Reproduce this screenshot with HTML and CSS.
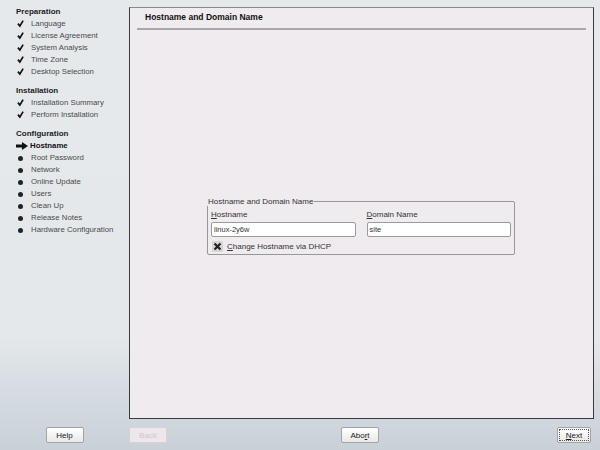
FILE: index.html
```html
<!DOCTYPE html>
<html lang="en">
<head>
    <meta charset="UTF-8">
    <title>Hostname and Domain Name</title>
    <link rel="stylesheet" href="styles.css">
</head>
<body>
    <div class="app">
        <div class="sidebar">
            <div class="step-group">
                <div class="group-title">Preparation</div>
                <div class="step"><span class="mark"><svg viewBox="0 0 8 9" width="7" height="8"><path d="M0.3 4.8 L2 3.4 L3.2 5.2 L6.2 0.2 L7.8 1.2 L3.4 8.6 Z" fill="#111"/></svg></span>Language</div>
                <div class="step"><span class="mark"><svg viewBox="0 0 8 9" width="7" height="8"><path d="M0.3 4.8 L2 3.4 L3.2 5.2 L6.2 0.2 L7.8 1.2 L3.4 8.6 Z" fill="#111"/></svg></span>License Agreement</div>
                <div class="step"><span class="mark"><svg viewBox="0 0 8 9" width="7" height="8"><path d="M0.3 4.8 L2 3.4 L3.2 5.2 L6.2 0.2 L7.8 1.2 L3.4 8.6 Z" fill="#111"/></svg></span>System Analysis</div>
                <div class="step"><span class="mark"><svg viewBox="0 0 8 9" width="7" height="8"><path d="M0.3 4.8 L2 3.4 L3.2 5.2 L6.2 0.2 L7.8 1.2 L3.4 8.6 Z" fill="#111"/></svg></span>Time Zone</div>
                <div class="step"><span class="mark"><svg viewBox="0 0 8 9" width="7" height="8"><path d="M0.3 4.8 L2 3.4 L3.2 5.2 L6.2 0.2 L7.8 1.2 L3.4 8.6 Z" fill="#111"/></svg></span>Desktop Selection</div>
            </div>
            <div class="step-group">
                <div class="group-title">Installation</div>
                <div class="step"><span class="mark"><svg viewBox="0 0 8 9" width="7" height="8"><path d="M0.3 4.8 L2 3.4 L3.2 5.2 L6.2 0.2 L7.8 1.2 L3.4 8.6 Z" fill="#111"/></svg></span>Installation Summary</div>
                <div class="step"><span class="mark"><svg viewBox="0 0 8 9" width="7" height="8"><path d="M0.3 4.8 L2 3.4 L3.2 5.2 L6.2 0.2 L7.8 1.2 L3.4 8.6 Z" fill="#111"/></svg></span>Perform Installation</div>
            </div>
            <div class="step-group">
                <div class="group-title">Configuration</div>
                <div class="step current"><span class="mark"><svg viewBox="0 0 12 8" width="12" height="8"><path d="M0 2.5 H6 V0 L12 4 L6 8 V5.5 H0 Z" fill="#111"/></svg></span>Hostname</div>
                <div class="step"><span class="mark"><span class="dot"></span></span>Root Password</div>
                <div class="step"><span class="mark"><span class="dot"></span></span>Network</div>
                <div class="step"><span class="mark"><span class="dot"></span></span>Online Update</div>
                <div class="step"><span class="mark"><span class="dot"></span></span>Users</div>
                <div class="step"><span class="mark"><span class="dot"></span></span>Clean Up</div>
                <div class="step"><span class="mark"><span class="dot"></span></span>Release Notes</div>
                <div class="step"><span class="mark"><span class="dot"></span></span>Hardware Configuration</div>
            </div>
        </div>

        <div class="panel">
            <div class="panel-title">Hostname and Domain Name</div>
            <div class="panel-body">
                <fieldset class="group-box">
                    <legend>Hostname and Domain Name</legend>
                    <div class="fields">
                        <div class="field">
                            <label><u>H</u>ostname</label>
                            <div class="input">linux-2y6w</div>
                        </div>
                        <div class="field">
                            <label><u>D</u>omain Name</label>
                            <div class="input">site</div>
                        </div>
                    </div>
                    <div class="check-row">
                        <span class="checkbox"><svg viewBox="0 0 11 11" width="11" height="11"><path d="M2.5 2.5 L8.5 8.5 M8.5 2.5 L2.5 8.5" stroke="#222" stroke-width="2.2"/></svg></span>
                        <span><u>C</u>hange Hostname via DHCP</span>
                    </div>
                </fieldset>
            </div>
        </div>

        <div class="footer-left">
            <button class="btn">Help</button>
        </div>
        <div class="footer-right">
            <div><button class="btn disabled">Back</button></div>
            <div><button class="btn">Abo<u>r</u>t</button></div>
            <div class="end"><button class="btn focus"><span><u>N</u>ext</span></button></div>
        </div>
    </div>
</body>
</html>
```

FILE: styles.css
```css
body {
    margin: 0;
    font-family: "Liberation Sans", Arial, sans-serif;
    font-size: 8px;
    color: #333;
}

.app {
    width: 600px;
    height: 450px;
    display: grid;
    grid-template-columns: 129px 1fr;
    grid-template-rows: 420px 30px;
    background: linear-gradient(to bottom, #e6e9ec 0%, #e4e8ea 75%, #d4dbe1 88%, #c9d1d8 100%);
}

.sidebar {
    padding: 6px 0 0 16px;
}

.step-group {
    margin-bottom: 7px;
}

.group-title {
    font-weight: bold;
    color: #222;
    height: 12px;
    line-height: 12px;
}

.step {
    display: flex;
    align-items: center;
    height: 12px;
    line-height: 12px;
    color: #4a4a4a;
    font-size: 7.8px;
}

.step.current {
    color: #111;
    font-weight: bold;
}

.mark {
    width: 14px;
    display: flex;
    align-items: center;
    justify-content: flex-start;
    padding-left: 1px;
}

.step.current .mark {
    padding-left: 0;
}

.dot {
    width: 5px;
    height: 5px;
    border-radius: 50%;
    background: #222;
    margin-left: 1px;
}

.panel {
    margin: 7px 6px 0 0;
    height: 412px;
    box-sizing: border-box;
    background: #efebee;
    border: 1px solid #3a3a3a;
    border-top-color: #8a8a8a;
    display: flex;
    flex-direction: column;
}

.panel-title {
    margin: 0 7px;
    padding: 4px 0 0 8px;
    height: 16px;
    font-weight: bold;
    font-size: 8.5px;
    color: #111;
    border-bottom: 2px solid #a8a6a8;
}

.panel-body {
    flex: 1;
    display: flex;
    align-items: center;
    justify-content: center;
    padding-top: 4px;
}

.group-box {
    width: 308px;
    box-sizing: border-box;
    margin: 0 0 0 -1px;
    padding: 0 3px 2px 3px;
    border: 1px solid #9a979a;
    border-radius: 2px;
}

.group-box legend {
    padding: 0 1px;
    margin-left: -4px;
    color: #333;
}

.fields {
    display: flex;
    gap: 11px;
    margin-top: 3px;
}

.field {
    flex: 1;
}

.field label {
    display: block;
    height: 11px;
    line-height: 11px;
    margin-bottom: 2px;
}

.input {
    height: 15px;
    box-sizing: border-box;
    border: 1px solid #9c9a9c;
    border-radius: 2px;
    background: #fff;
    padding: 0 2px;
    line-height: 13px;
    font-size: 7.5px;
    color: #333;
}

.check-row {
    display: flex;
    align-items: center;
    gap: 4px;
    margin-top: 4px;
    padding-left: 1px;
}

.checkbox {
    width: 11px;
    height: 11px;
    background: #d8d4d6;
    border-radius: 1px;
    display: flex;
}

.footer-left {
    display: flex;
    justify-content: center;
    align-items: flex-start;
    padding-top: 7px;
}

.footer-right {
    display: grid;
    grid-template-columns: 1fr auto 1fr;
    align-items: start;
    padding: 7px 9px 0 0;
}

.footer-right .end {
    display: flex;
    justify-content: flex-end;
}

.btn {
    width: 38px;
    height: 16px;
    padding: 0;
    font-family: "Liberation Sans", Arial, sans-serif;
    font-size: 8px;
    color: #222;
    background: linear-gradient(to bottom, #ffffff, #e9e9e9);
    border: 1px solid #a4a4a4;
    border-radius: 2px;
}

.btn.disabled {
    color: #cfc6cc;
    background: #ece7ea;
    border-color: #d8d2d6;
}

.btn.focus {
    width: 34px;
    padding: 1px;
}

.btn.focus span {
    display: block;
    height: 100%;
    box-sizing: border-box;
    border: 1px dotted #555;
    line-height: 11px;
}
```
